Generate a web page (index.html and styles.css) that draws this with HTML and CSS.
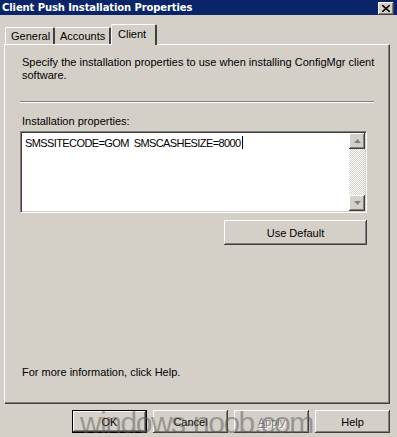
FILE: index.html
```html
<!DOCTYPE html>
<html lang="en">
<head>
    <meta charset="UTF-8">
    <title>Client Push Installation Properties</title>
    <link rel="stylesheet" href="styles.css">
</head>
<body>
    <div class="dialog">
        <div class="titlebar">
            <span class="title">Client Push Installation Properties</span>
            <span class="close">
                <svg width="8" height="7" viewBox="0 0 8 7"><path d="M0 0 L8 7 M8 0 L0 7" stroke="#000" stroke-width="1.6"/></svg>
            </span>
        </div>

        <div class="tabs">
            <div class="tab tab-general">General</div>
            <div class="tab tab-accounts">Accounts</div>
            <div class="tab tab-client active">Client</div>
        </div>

        <div class="panel">
            <p class="intro">Specify the installation properties to use when installing ConfigMgr client software.</p>
            <div class="separator"></div>

            <div class="field-label">Installation properties:</div>
            <div class="textbox">
                <div class="textbox-text">SMSSITECODE=GOM&nbsp; SMSCASHESIZE=8000<span class="caret"></span></div>
                <div class="scrollbar">
                    <div class="arrow">
                        <svg width="7" height="4" viewBox="0 0 7 4"><path d="M3.5 0 L7 4 L0 4 Z" fill="#808080"/></svg>
                    </div>
                    <div class="track"></div>
                    <div class="arrow">
                        <svg width="7" height="4" viewBox="0 0 7 4"><path d="M0 0 L7 0 L3.5 4 Z" fill="#808080"/></svg>
                    </div>
                </div>
            </div>
            <div class="default-row">
                <button class="btn btn-default">Use Default</button>
            </div>

            <p class="help-note">For more information, click Help.</p>
        </div>

        <div class="buttons">
            <button class="btn focused">OK</button>
            <button class="btn">Cancel</button>
            <button class="btn disabled"><u>A</u>pply</button>
            <button class="btn">Help</button>
        </div>

        <div class="watermark">windows-noob.com</div>
    </div>
</body>
</html>
```

FILE: styles.css
```css
body {
    margin: 0;
    padding: 0;
    background-color: #d4d0c8;
    font-family: "Liberation Sans", Arial, sans-serif;
    font-size: 11px;
    color: #000;
}

.dialog {
    position: relative;
    width: 397px;
    height: 437px;
    overflow: hidden;
    display: flex;
    flex-direction: column;
}

.titlebar {
    height: 15px;
    background-color: #0a246a;
    color: #fff;
    display: flex;
    align-items: center;
    justify-content: space-between;
    padding: 0 3px 0 2px;
}

.title {
    font-family: "DejaVu Sans", sans-serif;
    font-weight: bold;
    font-size: 10px;
    letter-spacing: -0.1px;
}

.close {
    width: 16px;
    height: 13px;
    margin-top: 1px;
    background-color: #d4d0c8;
    box-shadow: inset -1px -1px #404040, inset 1px 1px #fff, inset -2px -2px #808080;
    display: flex;
    align-items: center;
    justify-content: center;
}

/* tab strip */
.tabs {
    display: flex;
    align-items: flex-end;
    height: 20px;
    margin-top: 9px;
    padding-left: 5px;
    position: relative;
    z-index: 1;
}

.tab {
    height: 17px;
    line-height: 17px;
    padding: 0 5px;
    border-top: 1px solid #fff;
    border-left: 1px solid #fff;
    border-right: 2px solid #404040;
    border-radius: 2px 2px 0 0;
    box-sizing: border-box;
}

.tab-general { width: 50px; }
.tab-accounts { width: 56px; border-left: none; }

.tab-client {
    width: 46px;
    height: 21px;
    line-height: 19px;
    margin-left: 0;
    margin-bottom: -1px;
    background-color: #d4d0c8;
    padding-left: 6px;
}

.panel {
    width: 386px;
    height: 360px;
    margin-left: 4px;
    box-sizing: border-box;
    border-top: 1px solid #fff;
    border-left: 1px solid #fff;
    border-right: 1px solid #404040;
    border-bottom: 1px solid #404040;
    box-shadow: inset -1px -1px #808080;
    padding: 11px 15px 0 15px;
    display: flex;
    flex-direction: column;
}

.intro {
    margin: 0 0 0 2px;
    line-height: 13px;
    width: 362px;
}

.separator {
    margin-top: 19px;
    height: 0;
    border-top: 1px solid #808080;
    border-bottom: 1px solid #fff;
}

.field-label {
    margin-top: 12px;
    margin-left: 2px;
    line-height: 13px;
}

.textbox {
    margin-top: 3px;
    width: 347px;
    height: 82px;
    box-sizing: border-box;
    background-color: #fff;
    border-top: 1px solid #808080;
    border-left: 1px solid #808080;
    border-right: 1px solid #fff;
    border-bottom: 1px solid #fff;
    box-shadow: inset 1px 1px #404040, inset -1px -1px #d4d0c8;
    display: flex;
}

.textbox-text {
    flex: 1;
    padding: 4px 0 0 4px;
    line-height: 13px;
    letter-spacing: -0.6px;
}

.caret {
    display: inline-block;
    width: 1px;
    height: 13px;
    margin-left: 1px;
    background-color: #000;
    vertical-align: -2px;
}

.scrollbar {
    width: 16px;
    margin: 1px 1px 1px 0;
    display: flex;
    flex-direction: column;
}

.arrow {
    height: 16px;
    background-color: #d4d0c8;
    box-shadow: inset -1px -1px #404040, inset 1px 1px #fff, inset -2px -2px #808080;
    display: flex;
    align-items: center;
    justify-content: center;
}

.track {
    flex: 1;
    background-color: #fff;
    background-image: repeating-conic-gradient(#d4d0c8 0 25%, #fff 0 50%);
    background-size: 2px 2px;
}

.default-row {
    display: flex;
    justify-content: flex-end;
    width: 347px;
    margin-top: 7px;
}

.btn {
    font-family: "Liberation Sans", Arial, sans-serif;
    font-size: 11px;
    color: #000;
    background-color: #d4d0c8;
    border: none;
    padding: 0;
    width: 75px;
    height: 23px;
    box-shadow: inset -1px -1px #404040, inset 1px 1px #fff, inset -2px -2px #808080;
}

.btn-default {
    width: 143px;
    height: 25px;
}

.btn.focused {
    box-shadow: inset 0 0 0 1px #000, inset -2px -2px #404040, inset 2px 2px #fff, inset -3px -3px #808080;
}

.btn.disabled {
    color: #808080;
    text-shadow: 1px 1px #fff;
}

.help-note {
    margin: auto 0 24px 2px;
    line-height: 13px;
}

.buttons {
    display: flex;
    justify-content: flex-end;
    gap: 6px;
    width: 390px;
    margin-top: 6px;
}

.watermark {
    position: absolute;
    left: 80px;
    top: 408px;
    font-family: "Liberation Sans", Arial, sans-serif;
    font-size: 30px;
    line-height: 29px;
    color: rgba(90, 90, 90, 0.5);
    letter-spacing: -1.5px;
    white-space: nowrap;
    pointer-events: none;
}
```
